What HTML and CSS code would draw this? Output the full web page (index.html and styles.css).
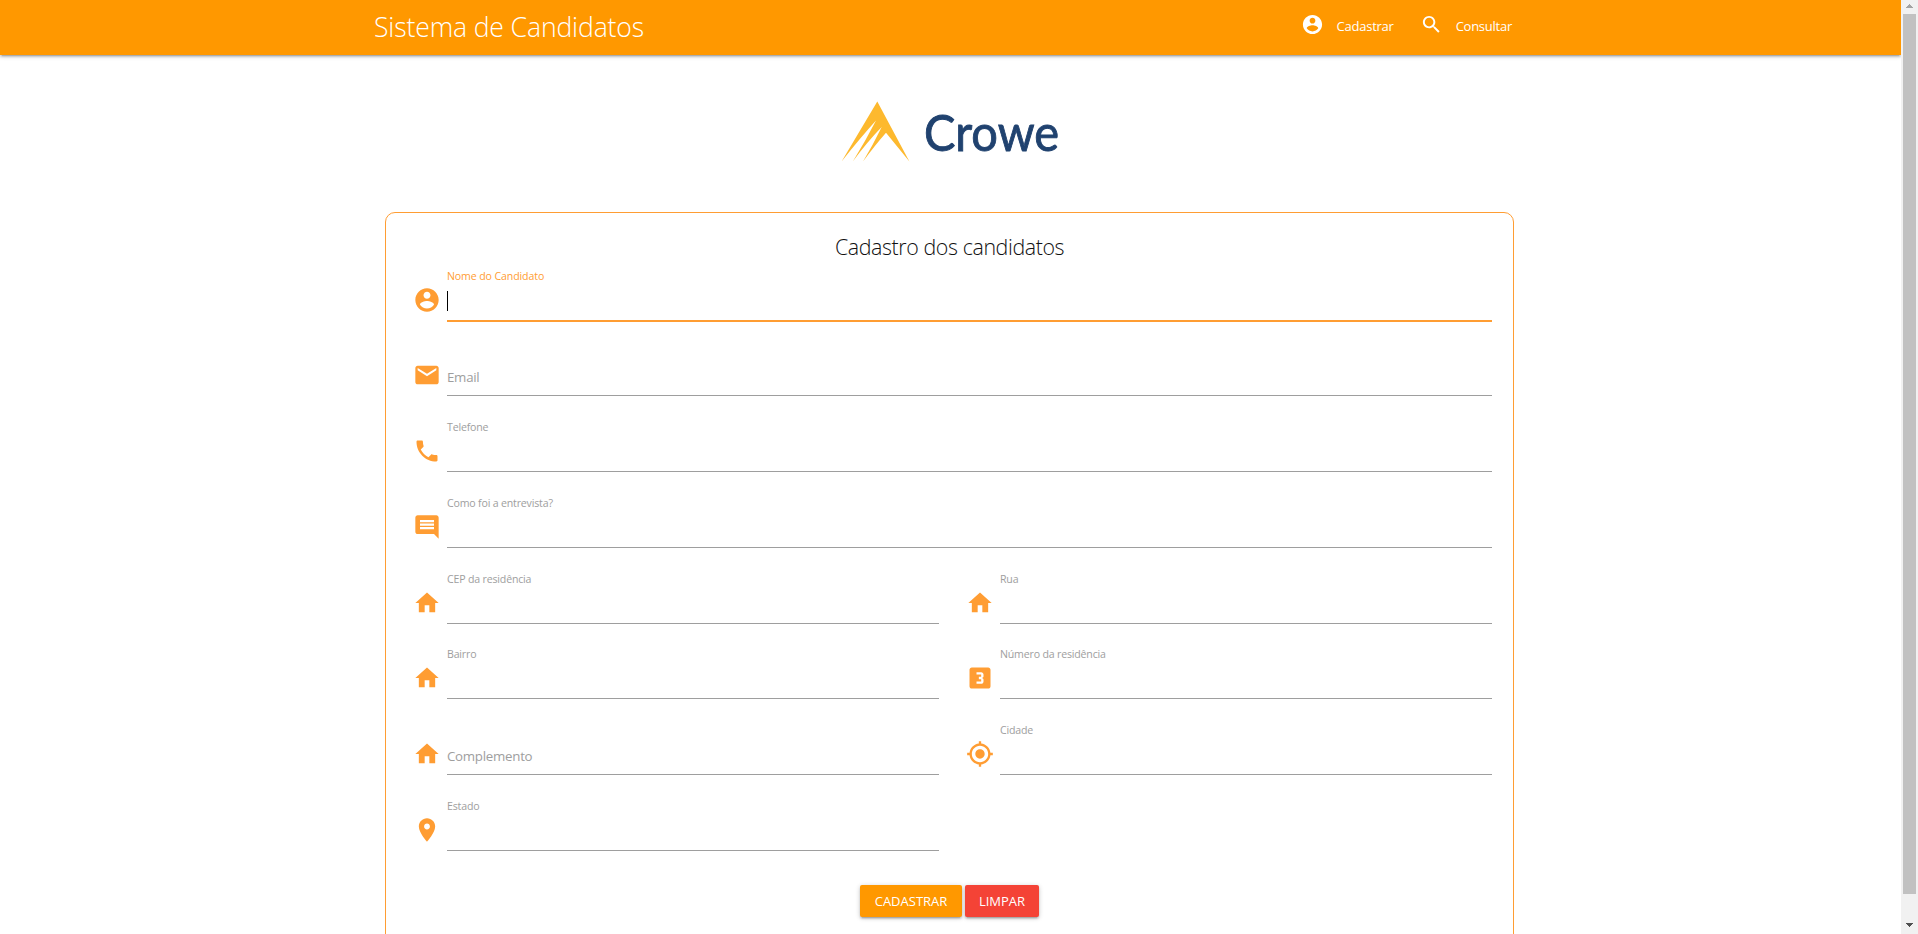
FILE: index.html
```html
<!DOCTYPE html>
<html lang="pt-BR">
<head>
<meta charset="utf-8">
<title>Sistema de Candidatos</title>
<link rel="stylesheet" href="styles.css">
</head>
<body>
<svg class="sprite" width="0" height="0">
  <symbol id="account" viewBox="0 0 24 24"><path d="M12 2C6.48 2 2 6.48 2 12s4.48 10 10 10 10-4.48 10-10S17.52 2 12 2zm0 3c1.66 0 3 1.34 3 3s-1.34 3-3 3-3-1.34-3-3 1.34-3 3-3zm0 14.2c-2.5 0-4.71-1.28-6-3.22.03-1.99 4-3.08 6-3.08 1.99 0 5.97 1.09 6 3.08-1.29 1.94-3.5 3.22-6 3.22z"/></symbol>
  <symbol id="search" viewBox="0 0 24 24"><path d="M15.5 14h-.79l-.28-.27C15.41 12.59 16 11.11 16 9.5 16 5.91 13.09 3 9.5 3S3 5.91 3 9.5 5.91 16 9.5 16c1.61 0 3.09-.59 4.23-1.57l.27.28v.79l5 4.99L20.49 19l-4.99-5zm-6 0C7.01 14 5 11.99 5 9.5S7.01 5 9.5 5 14 7.01 14 9.5 11.99 14 9.5 14z"/></symbol>
  <symbol id="mail" viewBox="0 0 24 24"><path d="M20 4H4c-1.1 0-1.99.9-1.99 2L2 18c0 1.1.9 2 2 2h16c1.1 0 2-.9 2-2V6c0-1.1-.9-2-2-2zm0 4l-8 5-8-5V6l8 5 8-5v2z"/></symbol>
  <symbol id="phone" viewBox="0 0 24 24"><path d="M6.62 10.79c1.44 2.83 3.76 5.14 6.59 6.59l2.2-2.2c.27-.27.67-.36 1.02-.24 1.12.37 2.33.57 3.57.57.55 0 1 .45 1 1V20c0 .55-.45 1-1 1-9.39 0-17-7.61-17-17 0-.55.45-1 1-1h3.5c.55 0 1 .45 1 1 0 1.25.2 2.45.57 3.57.11.35.03.74-.25 1.02l-2.2 2.2z"/></symbol>
  <symbol id="comment" viewBox="0 0 24 24"><path d="M21.99 4c0-1.1-.89-2-1.99-2H4c-1.1 0-2 .9-2 2v12c0 1.1.9 2 2 2h14l4 4-.01-18zM18 14H6v-2h12v2zm0-3H6V9h12v2zm0-3H6V6h12v2z"/></symbol>
  <symbol id="home" viewBox="0 0 24 24"><path d="M10 20v-6h4v6h5v-8h3L12 3 2 12h3v8z"/></symbol>
  <symbol id="three" viewBox="0 0 24 24"><path d="M19.01 3h-14c-1.1 0-2 .9-2 2v14c0 1.1.9 2 2 2h14c1.1 0 2-.9 2-2V5c0-1.1-.9-2-2-2zm-4 7.5c0 .83-.67 1.5-1.5 1.5.83 0 1.5.67 1.5 1.5V15c0 1.11-.9 2-2 2h-4v-2h4v-2h-2v-2h2V9h-4V7h4c1.1 0 2 .89 2 2v1.5z"/></symbol>
  <symbol id="target" viewBox="0 0 24 24"><path d="M12 8c-2.21 0-4 1.79-4 4s1.79 4 4 4 4-1.79 4-4-1.79-4-4-4zm8.94 3c-.46-4.17-3.77-7.48-7.94-7.94V1h-2v2.06C6.83 3.52 3.52 6.83 3.06 11H1v2h2.06c.46 4.17 3.77 7.48 7.94 7.94V23h2v-2.06c4.17-.46 7.48-3.77 7.94-7.94H23v-2h-2.06zM12 19c-3.87 0-7-3.13-7-7s3.13-7 7-7 7 3.13 7 7-3.13 7-7 7z"/></symbol>
  <symbol id="place" viewBox="0 0 24 24"><path d="M12 2C8.13 2 5 5.13 5 9c0 5.25 7 13 7 13s7-7.75 7-13c0-3.87-3.13-7-7-7zm0 9.5c-1.38 0-2.5-1.12-2.5-2.5s1.12-2.5 2.5-2.5 2.5 1.12 2.5 2.5-1.12 2.5-2.5 2.5z"/></symbol>
</svg>
<div class="page">
  <header class="topbar">
    <div class="brand">Sistema de Candidatos</div>
    <nav class="menu">
      <a class="link"><svg class="nav-icon"><use href="#account"/></svg><span>Cadastrar</span></a>
      <a class="link"><svg class="nav-icon"><use href="#search"/></svg><span>Consultar</span></a>
    </nav>
  </header>
  <main class="content">
    <svg class="logo" viewBox="0 0 240 80">
      <path class="peak" d="M47.3 11.6L79.4 71.4L56 42.7Q46 54 33 71.4Q43 55 51.7 37Q38 51 22.8 71.4Q35 52 46 30.5Q31 47 11.6 71.4Z"/>
      <text class="word" x="94" y="60.5" textLength="135" lengthAdjust="spacingAndGlyphs">Crowe</text>
    </svg>
    <form class="card">
      <h1 class="title">Cadastro dos candidatos</h1>
      <div class="fields">
        <div class="field wide focused"><svg class="icon"><use href="#account"/></svg><div class="input"><label class="small">Nome do Candidato</label><i class="caret"></i></div></div>
        <div class="field wide"><svg class="icon"><use href="#mail"/></svg><div class="input"><label class="large">Email</label></div></div>
        <div class="field wide"><svg class="icon"><use href="#phone"/></svg><div class="input"><label class="small">Telefone</label></div></div>
        <div class="field wide"><svg class="icon"><use href="#comment"/></svg><div class="input"><label class="small">Como foi a entrevista?</label></div></div>
        <div class="field"><svg class="icon"><use href="#home"/></svg><div class="input"><label class="small">CEP da residência</label></div></div>
        <div class="field"><svg class="icon"><use href="#home"/></svg><div class="input"><label class="small">Rua</label></div></div>
        <div class="field"><svg class="icon"><use href="#home"/></svg><div class="input"><label class="small">Bairro</label></div></div>
        <div class="field"><svg class="icon"><use href="#three"/></svg><div class="input"><label class="small">Número da residência</label></div></div>
        <div class="field"><svg class="icon"><use href="#home"/></svg><div class="input"><label class="large">Complemento</label></div></div>
        <div class="field"><svg class="icon"><use href="#target"/></svg><div class="input"><label class="small">Cidade</label></div></div>
        <div class="field"><svg class="icon"><use href="#place"/></svg><div class="input"><label class="small">Estado</label></div></div>
      </div>
      <div class="actions">
        <button type="button" class="btn submit">CADASTRAR</button>
        <button type="button" class="btn reset">LIMPAR</button>
      </div>
    </form>
  </main>
</div>
<div class="scrollbar">
  <svg class="arrow up" viewBox="0 0 7 4"><path d="M3 0h1v1h1v1h1v1h1v1H0V3h1V2h1V1h1z"/></svg>
  <div class="thumb"></div>
  <svg class="arrow down" viewBox="0 0 7 4"><path d="M0 0h7v1H6v1H5v1H4v1H3V3H2V2H1V1H0z"/></svg>
</div>
</body>
</html>
```
FILE: styles.css
```css
* { box-sizing: border-box; }
body {
  margin: 0;
  height: 934px;
  display: flex;
  overflow: hidden;
  background: #fff;
  font-family: "Open Sans", "Noto Sans", sans-serif;
}
.sprite { position: absolute; }
.page { width: 1901px; height: 934px; overflow: hidden; }

.topbar {
  height: 55px;
  padding: 0 389px 0 374px;
  display: flex;
  justify-content: space-between;
  background: #ff9800;
  color: #fff;
  box-shadow: 0 2px 2px 0 rgba(0,0,0,.14), 0 3px 1px -2px rgba(0,0,0,.12), 0 1px 5px 0 rgba(0,0,0,.2);
}
.brand { font-size: 26.6px; font-weight: 300; line-height: 55px; letter-spacing: -.15px; white-space: nowrap; }
.menu { display: flex; gap: 26px; }
.link { display: flex; gap: 13px; font-size: 13px; line-height: 52px; letter-spacing: -.25px; }
.nav-icon { width: 23px; height: 23px; margin-top: 13px; fill: #fff; }

.content { display: flex; flex-direction: column; align-items: center; padding-right: 2px; }
.logo { width: 240px; height: 80px; margin: 35px 0 42px; }
.peak { fill: #fdb92e; }
.word { font-family: Lato, sans-serif; font-size: 51px; font-weight: 400; fill: #20426f; stroke: #20426f; stroke-width: .9px; }

.card {
  width: 1129px;
  height: 800px;
  flex: none;
  padding: 19px 21px 0 27px;
  border: 1px solid #ff9d33;
  border-radius: 10px;
}
.title {
  margin: 0 0 0 -6px;
  height: 30px;
  font-size: 21.4px;
  font-weight: 300;
  line-height: 29px;
  letter-spacing: -.4px;
  text-align: center;
  color: #111;
}
.fields {
  display: grid;
  grid-template-columns: repeat(2, 526px);
  column-gap: 27px;
  grid-template-rows: 59px 75px 76px 76px 76px 75px 76px 76px;
}
.field { display: flex; align-items: flex-end; gap: 6px; }
.wide { grid-column: span 2; }
.icon { width: 28px; height: 28px; margin-bottom: 7px; fill: #ff9d33; flex: none; }
.input {
  flex: 1;
  height: 58px;
  display: flex;
  flex-direction: column;
  border-bottom: 1px solid #9e9e9e;
  color: #9e9e9e;
}
.focused .input { border-color: #ff9d33; color: #ff9d33; box-shadow: 0 1px 0 #ff9d33; }
.small { font-size: 10.6px; line-height: 16px; margin-top: 5px; letter-spacing: -.18px; }
.focused .small { letter-spacing: -.12px; }
.large { font-size: 13.3px; line-height: 20px; margin: 29px 0 0; letter-spacing: -.27px; }
.caret { width: 1px; height: 20px; margin-top: 7px; background: #000; }

.actions { display: flex; justify-content: center; gap: 3px; margin: 34px 0 0 -6px; }
.btn {
  height: 32px;
  border: 0;
  border-radius: 2px;
  padding: 0;
  color: #fff;
  font: 13px/32px "Open Sans", sans-serif;
  box-shadow: 0 2px 2px 0 rgba(0,0,0,.14), 0 3px 1px -2px rgba(0,0,0,.12), 0 1px 5px 0 rgba(0,0,0,.2);
}
.submit { width: 102px; background: #ff9800; }
.reset { width: 74px; background: #f44336; }

.scrollbar { width: 17px; padding: 4px 2px 0; background: #f1f1f1; display: flex; flex-direction: column; align-items: center; }
.arrow { width: 7px; height: 4px; flex: none; }
.up { fill: #a3a3a3; margin-bottom: 6px; }
.thumb { width: 13px; height: 880px; background: #c1c1c1; }
.down { fill: #505050; margin-top: 29px; }
```
